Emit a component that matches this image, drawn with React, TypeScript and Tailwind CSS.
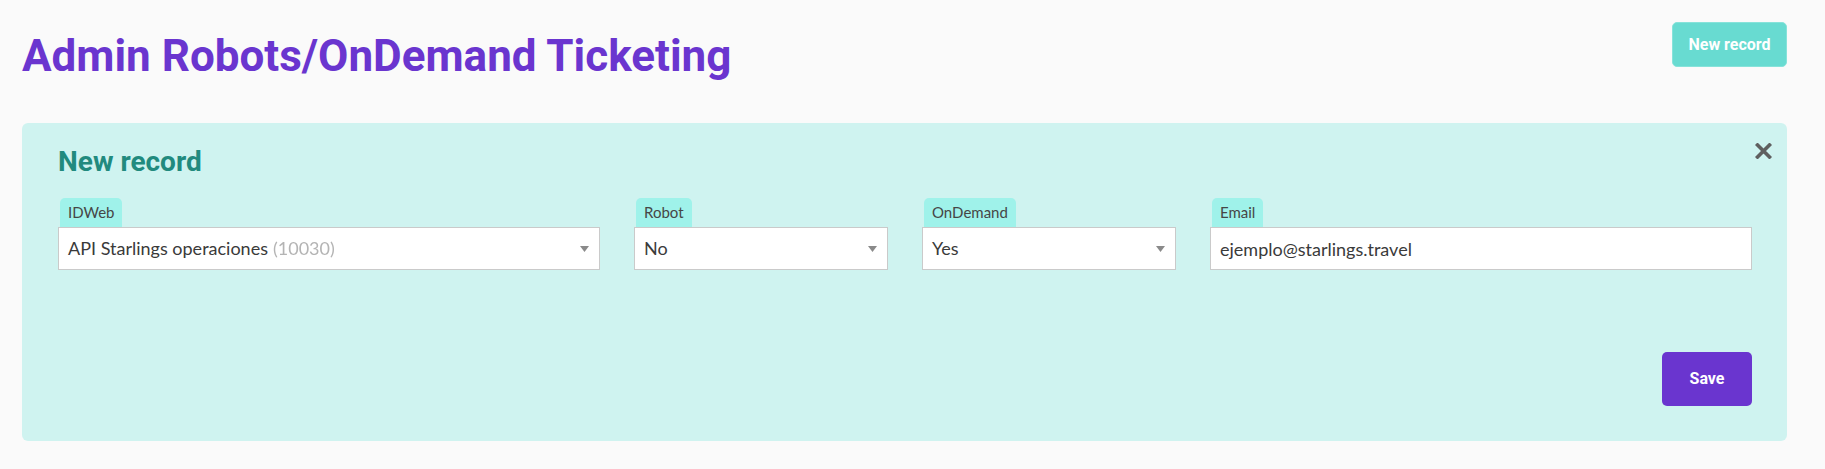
import { useState } from 'react';

type SelectProps = {
  label: string;
  value: string;
  hint?: string;
  span: string;
};

function FieldLabel({ label }: { label: string }) {
  return (
    <div className="flex pl-[2px]">
      <span className="h-[29px] rounded-t-[5px] bg-[#9ff2ea] px-[8px] text-[15px] leading-[29px] text-[#464646]">
        {label}
      </span>
    </div>
  );
}

function SelectField({ label, value, hint, span }: SelectProps) {
  return (
    <div className={span}>
      <FieldLabel label={label} />
      <button
        type="button"
        className="flex h-[43px] w-full items-center justify-between border border-[#cacaca] bg-white pl-[9px] pr-[10px] text-left text-[18px] leading-[41px] text-[#3a3a3a]"
      >
        <span className="whitespace-nowrap">
          {value}
          {hint && <span className="ml-[5px] text-[#b4b4b4] blur-[0.6px]">{hint}</span>}
        </span>
        <svg width="9" height="6" viewBox="0 0 9 6" className="shrink-0">
          <path d="M0 0h9L4.5 6z" fill="#8a8a8a" />
        </svg>
      </button>
    </div>
  );
}

export default function App() {
  const [showForm, setShowForm] = useState(true);
  const [email, setEmail] = useState('ejemplo@starlings.travel');

  return (
    <div className="min-h-[469px] bg-[#fafafa] pl-[22px] pr-[38px] pt-[22px] font-['Roboto',sans-serif]">
      {/* Header */}
      <div className="flex items-start justify-between">
        <h1 className="mt-2 text-[44px] font-bold leading-[52px] text-[#6a35cf]">
          Admin Robots/OnDemand Ticketing
        </h1>
        <button
          onClick={() => setShowForm(true)}
          className="h-[45px] w-[115px] rounded-[5px] border border-[#86e3da] bg-[#68dbd1] text-[16px] font-bold text-white"
        >
          New record
        </button>
      </div>

      {/* New record form */}
      {showForm && (
        <div className="relative mt-[41px] rounded-[6px] bg-[#cff3f0] pb-[35px] pl-[36px] pr-[35px] pt-[22px]">
          <button
            onClick={() => setShowForm(false)}
            className="absolute right-[15px] top-[20px]"
            aria-label="Close"
          >
            <svg width="17" height="16" viewBox="0 0 17 16">
              <path d="M2.5 2l12 12M14.5 2l-12 12" stroke="#5f5f5f" strokeWidth="3.6" strokeLinecap="square" />
            </svg>
          </button>

          <h2 className="text-[28px] font-bold leading-[34px] text-[#218a7e]">New record</h2>

          <div className="mt-[19px] grid grid-cols-12 gap-x-[34px] font-['Lato',sans-serif]">
            <SelectField span="col-span-4" label="IDWeb" value="API Starlings operaciones" hint="(10030)" />
            <SelectField span="col-span-2" label="Robot" value="No" />
            <SelectField span="col-span-2" label="OnDemand" value="Yes" />
            <div className="col-span-4">
              <FieldLabel label="Email" />
              <input
                type="text"
                value={email}
                onChange={(e) => setEmail(e.target.value)}
                className="block h-[43px] w-full border border-[#cacaca] bg-white px-[9px] text-[18px] leading-[41px] text-[#3a3a3a] outline-none"
              />
            </div>
          </div>

          <div className="mt-[82px] flex justify-end">
            <button className="h-[54px] w-[90px] rounded-[5px] bg-[#6a35cf] text-[16px] font-bold text-white">
              Save
            </button>
          </div>
        </div>
      )}
    </div>
  );
}
